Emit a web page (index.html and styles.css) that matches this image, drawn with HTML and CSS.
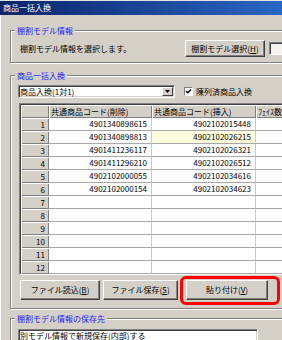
FILE: index.html
```html
<!DOCTYPE html>
<html lang="ja">
<head>
<meta charset="utf-8">
<title>商品一括入換</title>
<link rel="stylesheet" href="styles.css">
</head>
<body>
<div class="window">
  <div class="titlebar">商品一括入換</div>
  <div class="content">
    <fieldset class="group g1">
      <legend>棚割モデル情報</legend>
      <div class="row1">
        <span class="msg">棚割モデル情報を選択します。</span>
        <button class="btn btn-model">棚割モデル選択(<u>H</u>)</button>
        <span class="field"></span>
      </div>
    </fieldset>

    <fieldset class="group g2">
      <legend>商品一括入換</legend>
      <div class="row2">
        <div class="combo c-mode">
          <span class="combo-text">商品入換(1対1)</span>
          <span class="drop"><svg width="5" height="3" viewBox="0 0 5 3"><polygon points="0,0 5,0 2.5,3" fill="#000"/></svg></span>
        </div>
        <label class="check"><span class="box"><svg width="7" height="7" viewBox="0 0 7 7"><path d="M1 3 L2.8 4.8 L6 1.4" fill="none" stroke="#000" stroke-width="1.4"/></svg></span>陳列済商品入換</label>
      </div>

      <div class="gridwrap">
        <table class="grid">
          <colgroup><col class="w-rh"><col class="w-c1"><col class="w-c2"><col class="w-c3"></colgroup>
          <thead>
            <tr><th class="corner"></th><th class="colhead">共通商品コード(削除)</th><th class="colhead">共通商品コード(挿入)</th><th class="colhead">ﾌｪｲｽ数</th></tr>
          </thead>
          <tbody>
            <tr><th class="rowhead">1</th><td>4901340898615</td><td>4902102015448</td><td></td></tr>
            <tr><th class="rowhead">2</th><td>4901340898813</td><td class="sel">4902102026215</td><td></td></tr>
            <tr><th class="rowhead">3</th><td>4901411236117</td><td>4902102026321</td><td></td></tr>
            <tr><th class="rowhead">4</th><td>4901411296210</td><td>4902102026512</td><td></td></tr>
            <tr><th class="rowhead">5</th><td>4902102000055</td><td>4902102034616</td><td></td></tr>
            <tr><th class="rowhead">6</th><td>4902102000154</td><td>4902102034623</td><td></td></tr>
            <tr><th class="rowhead">7</th><td></td><td></td><td></td></tr>
            <tr><th class="rowhead">8</th><td></td><td></td><td></td></tr>
            <tr><th class="rowhead">9</th><td></td><td></td><td></td></tr>
            <tr><th class="rowhead">10</th><td></td><td></td><td></td></tr>
            <tr><th class="rowhead">11</th><td></td><td></td><td></td></tr>
            <tr><th class="rowhead">12</th><td></td><td></td><td></td></tr>
          </tbody>
        </table>
      </div>

      <div class="buttons">
        <button class="btn b-load">ファイル読込(<u>B</u>)</button>
        <button class="btn b-save">ファイル保存(<u>S</u>)</button>
        <div class="hl">
          <button class="btn b-paste">貼り付け(<u>V</u>)</button>
          <span class="ring"></span>
        </div>
      </div>
    </fieldset>

    <fieldset class="group g3">
      <legend>棚割モデル情報の保存先</legend>
      <div class="combo c-dest"><span class="combo-text">別モデル情報で新規保存(内部)する</span></div>
    </fieldset>
  </div>
</div>
</body>
</html>
```

FILE: styles.css
```css
* { box-sizing: border-box; }
html, body { margin: 0; padding: 0; }
body {
  background: #d4d0c8;
  font-family: "Noto Sans CJK JP", "Noto Sans", sans-serif;
  font-size: 8px;
  color: #000;
}
.window {
  width: 282px;
  height: 340px;
  overflow: hidden;
  background: #d4d0c8;
  border-top: 1px solid #e6e4de;
}
.titlebar {
  height: 14px;
  line-height: 14px;
  padding-left: 3px;
  color: #fff;
  font-size: 8px;
  background: linear-gradient(90deg, #0a246a 0%, #2a66c4 100%);
}
.content {
  padding-top: 10px;
  box-shadow: inset 1px 0 0 #ffffff;
}
.group {
  margin: 0 0 0 10px;
  width: 300px;
  min-width: 0;
  border: 1px solid #808080;
  box-shadow: inset 1px 1px 0 #fff, 1px 1px 0 #fff;
  padding: 0 0 0 7px;
}
.group legend {
  padding: 0 2px;
  margin-left: -3px;
  height: 11px;
  line-height: 11px;
  font-size: 8px;
  color: #1c1cf2;
  background: #d4d0c8;
}
.g1 { padding-top: 4px; padding-bottom: 5px; }
.g2 { margin-top: 7px; padding-top: 4px; padding-bottom: 8px; }
.g3 { margin-top: 4px; padding-top: 5px; padding-bottom: 10px; }

.row1 {
  display: flex;
  align-items: center;
  height: 17px;
}
.msg {
  width: 167px;
  padding-left: 2px;
  line-height: 10px;
}
.btn {
  font: inherit;
  font-size: 8px;
  color: #000;
  background: #d4d0c8;
  border: 1px solid;
  border-color: #fff #404040 #404040 #fff;
  box-shadow: inset -1px -1px 0 #808080;
  padding: 0;
  margin: 0;
  line-height: 10px;
  text-align: center;
}
.btn u { text-underline-offset: 1px; }
.btn-model { width: 80px; height: 17px; }
.field {
  width: 30px;
  height: 13px;
  margin-left: 4px;
  border: 1px solid;
  border-color: #808080 #fff #fff #808080;
  box-shadow: inset 1px 1px 0 #404040;
  background: #f4f3f0;
}

.row2 {
  display: flex;
  align-items: center;
  height: 13px;
}
.combo {
  display: flex;
  align-items: center;
  height: 13px;
  border: 1px solid;
  border-color: #808080 #fff #fff #808080;
  box-shadow: inset 1px 1px 0 #404040, inset -1px -1px 0 #d4d0c8;
  background: #fff;
  padding: 1px;
}
.c-mode { width: 157px; }
.combo-text { line-height: 9px; white-space: nowrap; }
.drop {
  margin-left: auto;
  width: 11px;
  height: 9px;
  display: flex;
  align-items: center;
  justify-content: center;
  background: #d4d0c8;
  border: 1px solid;
  border-color: #fff #404040 #404040 #fff;
}
.check {
  display: flex;
  align-items: center;
  margin-left: 9px;
  gap: 3px;
  line-height: 10px;
  white-space: nowrap;
}
.box {
  width: 9px;
  height: 9px;
  border: 1px solid;
  border-color: #808080 #fff #fff #808080;
  background: #fff;
  display: flex;
  align-items: center;
  justify-content: center;
}
.box svg { display: block; }

.gridwrap {
  margin: 5px 0 0 1px;
  width: 300px;
  overflow: hidden;
  border-top: 1px solid #808080;
  border-left: 1px solid #808080;
  border-bottom: 1px solid #fff;
}
.grid {
  border-collapse: separate;
  border-spacing: 0;
  table-layout: fixed;
  width: 296px;
  border-top: 1px solid #404040;
  border-left: 1px solid #404040;
}
.w-rh { width: 28px; }
.w-c1 { width: 103px; }
.w-c2 { width: 104px; }
.w-c3 { width: 60px; }
.grid tr { height: 13px; }
.grid th {
  background: #d4d0c8;
  box-shadow: inset 1px 1px 0 #fff, inset -1px -1px 0 #808080;
  font-weight: normal;
  padding: 0;
  line-height: 12px;
  white-space: nowrap;
  overflow: hidden;
}
.grid .colhead { text-align: left; padding-left: 2px; }
.grid .rowhead { text-align: right; padding-right: 4px; }
.grid td {
  background: #fff;
  border-right: 1px solid #c8c8c8;
  border-bottom: 1px solid #a8a8a8;
  padding: 0 4px 0 0;
  text-align: right;
  line-height: 12px;
  white-space: nowrap;
  overflow: hidden;
  font-variant-numeric: tabular-nums;
}
.grid td.sel { background: #ffffe0; }

.buttons {
  display: flex;
  margin: 5px 0 0 2px;
  height: 20px;
}
.b-load { width: 80px; height: 20px; }
.b-save { width: 75px; height: 20px; margin-left: 3px; }
.hl {
  position: relative;
  margin-left: 8px;
  display: flex;
}
.b-paste { width: 82px; height: 20px; }
.ring {
  position: absolute;
  left: -6px;
  top: -4px;
  right: -12px;
  bottom: -5px;
  border: 3px solid #ff0000;
  border-radius: 6px;
  pointer-events: none;
}
.c-dest { width: 240px; }
```
